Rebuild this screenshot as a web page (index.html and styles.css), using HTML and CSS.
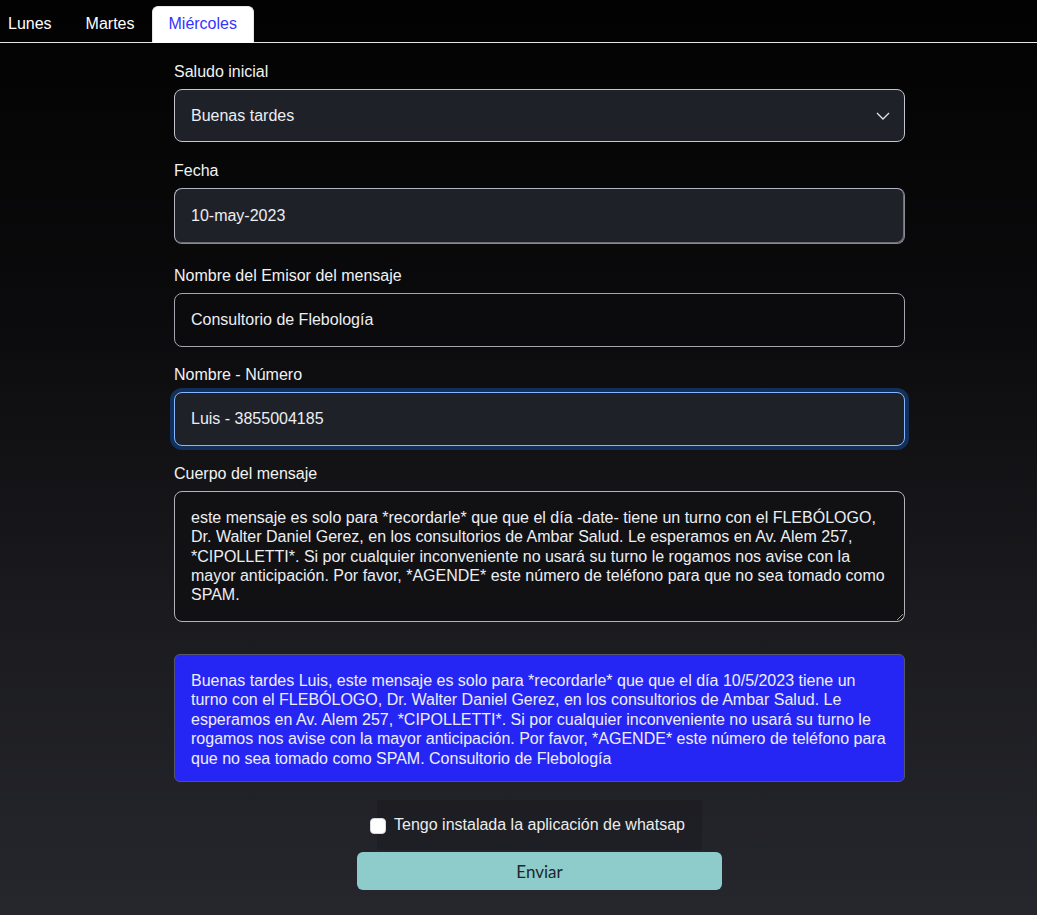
FILE: index.html
```html
<!DOCTYPE html>
<html lang="es">
<head>
<meta charset="utf-8">
<title>Recordatorio de turnos</title>
<link rel="stylesheet" href="styles.css">
</head>
<body>
<nav class="tabs">
  <a class="tab first" href="#">Lunes</a>
  <a class="tab" href="#">Martes</a>
  <a class="tab active" href="#">Miércoles</a>
</nav>
<main class="form">
  <div class="group">
    <label class="label">Saludo inicial</label>
    <div class="select-wrap">
      <select class="control select"><option>Buenas tardes</option></select>
      <svg class="chevron" width="14" height="8" viewBox="0 0 14 8"><path d="M1 1 L7 7 L13 1" fill="none" stroke="#e2e4ea" stroke-width="1.3"/></svg>
    </div>
  </div>
  <div class="group group-date">
    <label class="label">Fecha</label>
    <input class="control date" type="text" value="10-may-2023">
  </div>
  <div class="group">
    <label class="label">Nombre del Emisor del mensaje</label>
    <input class="control dark" type="text" value="Consultorio de Flebología">
  </div>
  <div class="group">
    <label class="label">Nombre - Número</label>
    <input class="control focus" type="text" value="Luis - 3855004185">
  </div>
  <div class="group">
    <label class="label">Cuerpo del mensaje</label>
    <textarea class="control area" wrap="off">este mensaje es solo para *recordarle* que que el día -date- tiene un turno con el FLEBÓLOGO,
Dr. Walter Daniel Gerez, en los consultorios de Ambar Salud. Le esperamos en Av. Alem 257,
*CIPOLLETTI*. Si por cualquier inconveniente no usará su turno le rogamos nos avise con la
mayor anticipación. Por favor, *AGENDE* este número de teléfono para que no sea tomado como
SPAM.</textarea>
  </div>
  <div class="preview">Buenas tardes Luis, este mensaje es solo para *recordarle* que que el día 10/5/2023 tiene un<br>turno con el FLEBÓLOGO, Dr. Walter Daniel Gerez, en los consultorios de Ambar Salud. Le<br>esperamos en Av. Alem 257, *CIPOLLETTI*. Si por cualquier inconveniente no usará su turno le<br>rogamos nos avise con la mayor anticipación. Por favor, *AGENDE* este número de teléfono para<br>que no sea tomado como SPAM. Consultorio de Flebología</div>
  <div class="check-row">
    <label class="check"><input type="checkbox" class="box"><span>Tengo instalada la aplicación de whatsap</span></label>
  </div>
  <div class="actions">
    <button class="send" type="button">Enviar</button>
  </div>
</main>
</body>
</html>
```
FILE: styles.css
```css
html, body {
  margin: 0;
  padding: 0;
}
body {
  min-height: 100vh;
  background: linear-gradient(180deg, #020202 0%, #0b0b0d 35%, #1a1a1e 65%, #26272d 100%);
  font-family: "Liberation Sans", Arial, sans-serif;
  font-size: 16px;
  color: #f2f2f2;
}
.tabs {
  display: flex;
  padding-top: 6px;
  border-bottom: 1px solid #e4e6ea;
}
.tab {
  display: block;
  padding: 5px 16px 6px;
  line-height: 24px;
  border: 1px solid transparent;
  border-radius: 6px 6px 0 0;
  margin-bottom: -1px;
  color: #ffffff;
  text-decoration: none;
}
.tab.first {
  padding-left: 7px;
}
.tab.active {
  background: #ffffff;
  border-color: #e4e6ea #e4e6ea #ffffff;
  color: #3434ff;
}
.form {
  width: 731px;
  margin-left: 174px;
  padding-top: 17px;
  padding-bottom: 25px;
}
.group {
  margin-bottom: 16px;
}
.group:first-child {
  margin-bottom: 17px;
}
.group-date {
  margin-bottom: 20px;
}
.label {
  display: block;
  line-height: 24px;
  margin-bottom: 5px;
  color: #f2f2f2;
}
.control {
  display: block;
  box-sizing: border-box;
  width: 100%;
  height: 54px;
  margin: 0;
  padding: 0 16px;
  font-family: "Liberation Sans", Arial, sans-serif;
  font-size: 16px;
  color: #eceef2;
  background: #1f2129;
  border: 1px solid #c3c5cf;
  border-radius: 8px;
  outline: none;
}
.select-wrap {
  position: relative;
}
.select {
  height: 53px;
  appearance: none;
  -webkit-appearance: none;
}
.chevron {
  position: absolute;
  right: 15px;
  top: 23px;
}
.date {
  height: 56px;
  border-width: 1px;
  border-color: #b4b6c2 #8a8b92 #8a8b92 #b4b6c2;
  box-shadow: inset -1px -1px 0 #6e6f76;
}
.dark {
  background: #0b0b0d;
  border-color: #a4a5ad;
}
.focus {
  background: #1f2129;
  border-color: #86b7fe;
  box-shadow: 0 0 0 4px #12305c;
}
.area {
  height: 131px;
  padding: 16px 16px;
  line-height: 19.3px;
  background: #111114;
  border-color: #b2b3bb;
  overflow: hidden;
  white-space: pre;
  resize: vertical;
}
.preview {
  box-sizing: border-box;
  margin-top: 32px;
  height: 128px;
  padding: 16px 16px;
  line-height: 19.4px;
  white-space: nowrap;
  background: #2626f4;
  color: #eeeeff;
  border: 1px solid #55566a;
  border-radius: 6px;
}
.check-row {
  display: flex;
  justify-content: center;
  margin-top: 18px;
}
.check {
  display: flex;
  align-items: center;
  height: 50px;
  padding: 0 17px;
  background: rgba(0, 0, 0, 0.12);
  color: #ececec;
}
.box {
  appearance: none;
  -webkit-appearance: none;
  width: 16px;
  height: 16px;
  margin: 1px 8px 0 -24px;
  background: #ffffff;
  border: 1px solid #d6d8dc;
  border-radius: 4px;
}
.actions {
  display: flex;
  justify-content: center;
  margin-top: 2px;
}
.send {
  width: 365px;
  height: 38px;
  background: #8ecccc;
  color: #22252a;
  border: none;
  border-radius: 6px;
  font-family: Lato, "DejaVu Sans", sans-serif;
  font-size: 17px;
}
```
